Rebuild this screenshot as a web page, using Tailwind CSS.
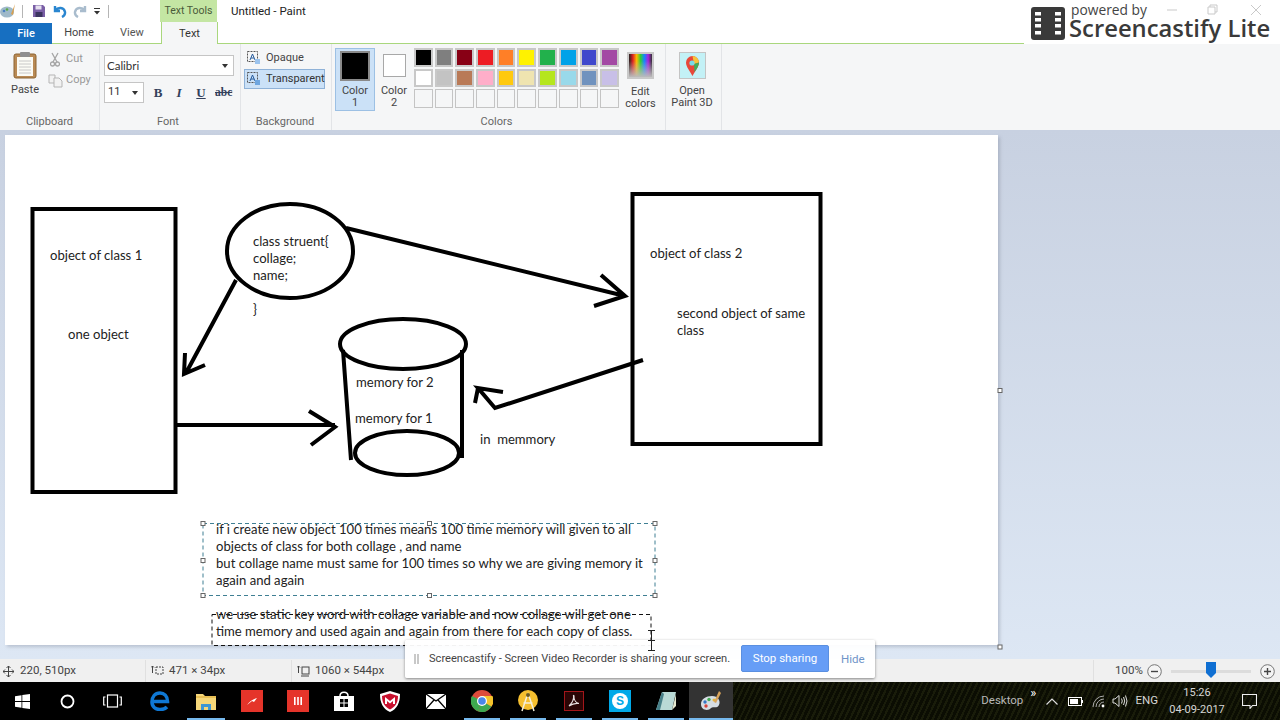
<!DOCTYPE html>
<html>
<head>
<meta charset="utf-8">
<script src="https://cdn.jsdelivr.net/npm/@tailwindcss/browser@4"></script>
</head>
<body class="m-0 overflow-hidden">
<div class="relative flex h-[720px] w-[1280px] flex-col overflow-hidden bg-white font-['Roboto',sans-serif] text-[11px] text-[#3c3c3c]">

  <!-- Title bar + tabs -->
  <header class="relative h-[44px] shrink-0 border-b border-[#a9d77d] bg-white">
    <div class="flex h-[22px] items-center">
      <svg class="ml-[0px] h-[16px] w-[16px]" viewBox="0 0 16 16"><ellipse cx="7" cy="9" rx="7" ry="5.5" fill="#9fb9c9"/><circle cx="4" cy="8" r="1.3" fill="#4a7fc0"/><circle cx="7" cy="6.5" r="1.3" fill="#5aa845"/><path d="M15 1 L11 11 L13 12 Z" fill="#d9a050"/></svg>
      <span class="ml-[6px] h-[13px] w-px bg-[#b5b5b5]"></span>
      <svg class="ml-[9px] h-[14px] w-[14px]" viewBox="0 0 14 14"><path d="M1 1H11L13 3V13H1Z" fill="#7a5fa6"/><rect x="3.500" y="1.500" width="6" height="4" fill="#e6e0ef"/><rect x="3.500" y="8" width="7" height="5" fill="#3c3560"/></svg>
      <svg class="ml-[7px] h-[14px] w-[14px]" viewBox="0 0 14 14"><path d="M2 2V7H7M2 6.500C5 3 11 3 12 8C12.300 10 11 12 9 13" fill="none" stroke="#2a86d0" stroke-width="2.400"/></svg>
      <svg class="ml-[6px] h-[14px] w-[14px]" viewBox="0 0 14 14"><path d="M12 2V7H7M12 6.500C9 3 3 3 2 8C1.700 10 3 12 5 13" fill="none" stroke="#a9bccd" stroke-width="2.400"/></svg>
      <svg class="ml-[6px] h-[8px] w-[8px]" viewBox="0 0 8 8"><path d="M1 1H7V2H1ZM1 4H7L4 7.500Z" fill="#333"/></svg>
      <span class="ml-[7px] h-[13px] w-px bg-[#b5b5b5]"></span>
      <span class="ml-[51px] flex h-[22px] w-[57px] items-center justify-center bg-[#c4e6a3] text-[10.500px] text-[#4a5a3a]">Text Tools</span>
      <span class="ml-[14px] pt-[2px] text-[11.500px] text-[#222]">Untitled - Paint</span>
    </div>
    <nav class="flex h-[22px] items-center">
      <span class="flex h-[21px] w-[52px] items-center justify-center bg-[#176fc1] pt-[2px] text-[11px] font-medium text-white">File</span>
      <span class="w-[54px] pt-[1px] text-center text-[#444]">Home</span>
      <span class="w-[52px] pt-[1px] text-center text-[#555]">View</span>
      <span class="ml-[3px] flex h-[22px] w-[57px] items-center justify-center border-x border-[#a9d77d] bg-[#f5f6f7] pt-[2px] text-[#333]">Text</span>
    </nav>
    <!-- watermark -->
    <div class="absolute left-[1024px] top-0 flex h-[44px] w-[256px] bg-white">
      <svg class="ml-[7px] mt-[7px] h-[33px] w-[34px]" viewBox="0 0 34 33"><rect width="34" height="33" rx="3" fill="#3a3a3a"/><g fill="#fff"><rect x="4" y="5" width="6" height="3.500"/><rect x="4" y="11" width="6" height="3.500"/><rect x="4" y="17" width="6" height="3.500"/><rect x="4" y="24" width="6" height="3.500"/><rect x="24" y="5" width="6" height="3.500"/><rect x="24" y="11" width="6" height="3.500"/><rect x="24" y="17" width="6" height="3.500"/><rect x="24" y="24" width="6" height="3.500"/></g></svg>
      <div class="relative flex-1">
        <span class="absolute left-[6px] top-[3px] whitespace-nowrap font-['Open_Sans',sans-serif] text-[13.800px] leading-[14px] text-[#444]">powered by</span>
        <span class="absolute left-[4px] top-[17px] whitespace-nowrap font-['Open_Sans',sans-serif] text-[23.800px] font-semibold leading-[22px] text-[#3a3a3a]">Screencastify Lite</span>
      </div>
      <svg class="absolute left-[140px] top-[3px] h-[14px] w-[105px]" viewBox="0 0 105 14" fill="none" stroke="#c9c9c9"><path d="M3 7H13"/><path d="M44 4H51V11H44ZM46 4V2H53V9H51"/><path d="M87 2L97 12M97 2L87 12"/></svg>
    </div>
  </header>

  <!-- Ribbon -->
  <section class="flex h-[86px] shrink-0 bg-[#f5f6f7]">
    <!-- Clipboard -->
    <div class="flex w-[100px] flex-col border-r border-[#e2e4e7]">
      <div class="flex h-[71px]">
        <div class="flex w-[50px] flex-col items-center pt-[7px]">
          <svg class="h-[28px] w-[24px]" viewBox="0 0 24 28"><rect x="1" y="3" width="22" height="24" rx="2" fill="#b98a55" stroke="#8d6432"/><rect x="4" y="6" width="16" height="19" fill="#fbfbf5"/><path d="M6 10H18M6 13H18M6 16H18M6 19H18M6 22H18" stroke="#c8c8c8"/><rect x="7" y="1" width="10" height="5" rx="1" fill="#8f8f8f"/></svg>
          <span class="mt-[3px] text-[11px] text-[#444]">Paste</span>
        </div>
        <div class="flex flex-col pt-[8px] text-[#999]">
          <div class="flex h-[15px] items-center gap-[6px]">
            <svg class="h-[15px] w-[10px]" viewBox="0 0 10 15" fill="none" stroke="#a5a5a5" stroke-width="1.300"><path d="M2 1L7 10M8 1L3 10"/><circle cx="2.500" cy="12" r="2"/><circle cx="7.500" cy="12" r="2"/></svg>
            <span>Cut</span>
          </div>
          <div class="mt-[6px] flex h-[15px] items-center gap-[3px]">
            <svg class="-ml-[2px] h-[14px] w-[15px]" viewBox="0 0 15 14" fill="#f2f2f2" stroke="#b5b5b5"><path d="M1 1H7V9H1Z"/><path d="M6 4H11L14 7V13H6Z"/></svg>
            <span>Copy</span>
          </div>
        </div>
      </div>
      <span class="text-center text-[11px] leading-[14px] text-[#666]">Clipboard</span>
    </div>
    <!-- Font -->
    <div class="flex w-[141px] flex-col border-r border-[#e2e4e7] pl-[4px] pr-[4px]">
      <div class="h-[71px] pt-[11px]">
        <div class="flex h-[21px] w-[130px] items-center justify-between border border-[#c5c5c5] bg-white pl-[2px] pr-[5px] font-['Lato',sans-serif] text-[11.500px] text-[#333]">Calibri<span class="h-0 w-0 border-x-[3px] border-t-[4px] border-x-transparent border-t-[#333]"></span></div>
        <div class="mt-[6px] flex items-center">
          <div class="flex h-[21px] w-[40px] items-center justify-between border border-[#c5c5c5] bg-white pl-[3px] pr-[5px] text-[#333]">11<span class="h-0 w-0 border-x-[3px] border-t-[4px] border-x-transparent border-t-[#333]"></span></div>
          <span class="ml-[9px] w-[10px] text-center font-['Liberation_Serif',serif] text-[13px] font-bold text-[#33415c]">B</span>
          <span class="ml-[11px] w-[10px] text-center font-['Liberation_Serif',serif] text-[13px] font-bold italic text-[#33415c]">I</span>
          <span class="ml-[12px] w-[10px] text-center font-['Liberation_Serif',serif] text-[13px] font-bold text-[#33415c] underline">U</span>
          <span class="ml-[9px] font-['Liberation_Serif',serif] text-[11.500px] font-bold text-[#33415c] line-through">abc</span>
        </div>
      </div>
      <span class="-ml-[4px] text-center text-[11px] leading-[14px] text-[#666]">Font</span>
    </div>
    <!-- Background -->
    <div class="flex w-[91px] flex-col border-r border-[#e2e4e7] pl-[3px] pr-[2px]">
      <div class="h-[71px] pt-[5px]">
        <div class="flex h-[18px] items-center gap-[5px] pl-[3px] text-[#444]">
          <svg class="h-[14px] w-[14px]" viewBox="0 0 14 14"><rect x=".5" y=".5" width="10" height="10" fill="none" stroke="#555" stroke-dasharray="2 1"/><path d="M3 9L5.500 3L8 9M4 7H7" fill="none" stroke="#245a9c"/><rect x="8" y="8" width="5" height="5" fill="#9cc4ee"/></svg>
          <span>Opaque</span>
        </div>
        <div class="mt-[2px] flex h-[20px] w-[81px] items-center gap-[5px] border border-[#8fb2d8] bg-[#cbe1f7] pl-[2px] text-[#333]">
          <svg class="h-[14px] w-[14px] shrink-0" viewBox="0 0 14 14"><rect x=".5" y=".5" width="10" height="10" fill="none" stroke="#555" stroke-dasharray="2 1"/><path d="M3 9L5.500 3L8 9M4 7H7" fill="none" stroke="#245a9c"/><rect x="8" y="8" width="5" height="5" fill="#6ea6e0"/></svg>
          <span class="whitespace-nowrap">Transparent</span>
        </div>
      </div>
      <span class="-ml-[3px] text-center text-[11px] leading-[14px] text-[#666]">Background</span>
    </div>
    <!-- Colors -->
    <div class="flex w-[334px] flex-col border-r border-[#e2e4e7] pr-[2px]">
      <div class="flex h-[71px] pl-[3px] pt-[4px]">
        <div class="flex h-[63px] w-[40px] flex-col items-center border border-[#9cc0e4] bg-[#cbe1f7] pt-[2px] leading-[12px] text-[#444]">
          <span class="block h-[30px] w-[30px] border-2 border-[#8a8a8a] bg-black"></span>
          <span class="mt-[4px] text-center">Color<br>1</span>
        </div>
        <div class="flex w-[38px] flex-col items-center pt-[6px] leading-[12px] text-[#444]">
          <span class="block h-[23px] w-[23px] border border-[#a8a8a8] bg-white"></span>
          <span class="mt-[8px] text-center">Color<br>2</span>
        </div>
        <div class="ml-[1px] grid h-[61px] grid-cols-[repeat(10,18.700px)] grid-rows-[repeat(3,18.700px)] gap-[2px]">
          <span class="border-2 border-[#c8c8c8] bg-[#000000]"></span><span class="border-2 border-[#c8c8c8] bg-[#7f7f7f]"></span><span class="border-2 border-[#c8c8c8] bg-[#880015]"></span><span class="border-2 border-[#c8c8c8] bg-[#ed1c24]"></span><span class="border-2 border-[#c8c8c8] bg-[#ff7f27]"></span><span class="border-2 border-[#c8c8c8] bg-[#fff200]"></span><span class="border-2 border-[#c8c8c8] bg-[#22b14c]"></span><span class="border-2 border-[#c8c8c8] bg-[#00a2e8]"></span><span class="border-2 border-[#c8c8c8] bg-[#3f48cc]"></span><span class="border-2 border-[#c8c8c8] bg-[#a349a4]"></span>
          <span class="border-2 border-[#c8c8c8] bg-[#ffffff]"></span><span class="border-2 border-[#c8c8c8] bg-[#c3c3c3]"></span><span class="border-2 border-[#c8c8c8] bg-[#b97a57]"></span><span class="border-2 border-[#c8c8c8] bg-[#ffaec9]"></span><span class="border-2 border-[#c8c8c8] bg-[#ffc90e]"></span><span class="border-2 border-[#c8c8c8] bg-[#efe4b0]"></span><span class="border-2 border-[#c8c8c8] bg-[#b5e61d]"></span><span class="border-2 border-[#c8c8c8] bg-[#99d9ea]"></span><span class="border-2 border-[#c8c8c8] bg-[#7092be]"></span><span class="border-2 border-[#c8c8c8] bg-[#c8bfe7]"></span>
          <span class="border border-[#c4c4c4] bg-[#f5f6f7]"></span><span class="border border-[#c4c4c4] bg-[#f5f6f7]"></span><span class="border border-[#c4c4c4] bg-[#f5f6f7]"></span><span class="border border-[#c4c4c4] bg-[#f5f6f7]"></span><span class="border border-[#c4c4c4] bg-[#f5f6f7]"></span><span class="border border-[#c4c4c4] bg-[#f5f6f7]"></span><span class="border border-[#c4c4c4] bg-[#f5f6f7]"></span><span class="border border-[#c4c4c4] bg-[#f5f6f7]"></span><span class="border border-[#c4c4c4] bg-[#f5f6f7]"></span><span class="border border-[#c4c4c4] bg-[#f5f6f7]"></span>
        </div>
        <div class="ml-[1px] flex w-[41px] flex-col items-center pt-[4px] leading-[12px] text-[#444]">
          <span class="block h-[27px] w-[27px] border-2 border-[#c8c8c8] bg-[linear-gradient(to_bottom,transparent_30%,#bbbbbb),linear-gradient(to_right,#222222,#e22222,#ffbb00,#33cc33,#1188ff,#aa22dd,#333333)]"></span>
          <span class="mt-[7px] text-center">Edit<br>colors</span>
        </div>
      </div>
      <span class="-ml-[2px] text-center text-[11px] leading-[14px] text-[#666]">Colors</span>
    </div>
    <!-- Paint 3D -->
    <div class="flex w-[56px] flex-col items-center border-r border-[#e2e4e7] pr-[3px] pt-[8px] leading-[12px] text-[#444]">
      <svg class="h-[27px] w-[27px]" viewBox="0 0 27 27"><rect x=".5" y=".5" width="26" height="26" fill="#c3f1f6" stroke="#c4c4c4"/><path d="M13.500 24C11 19 7 15 7 10.500A6.500 6.500 0 0 1 20 10.500C20 15 16 19 13.500 24Z" fill="#e8483a"/><path d="M13.500 4A6.500 6.500 0 0 1 20 10.500L15 12Z" fill="#f6c43a"/><path d="M15 12L20 10.500C20 13 18 17 15.500 20Z" fill="#3fae5a"/><circle cx="13" cy="11" r="2.600" fill="#7adbe8"/></svg>
      <span class="mt-[6px] text-center whitespace-nowrap">Open<br>Paint 3D</span>
    </div>
  </section>

  <!-- Work area -->
  <main class="relative h-[529px] shrink-0 overflow-hidden bg-linear-to-b from-[#c8d1e1] to-[#dde7f4]">
    <div class="ml-[5px] mt-[5px] h-[510px] w-[993px] bg-white shadow-[2px_2px_3px_rgba(120,130,150,0.35)]"></div>
    <svg class="absolute left-0 top-0 h-[529px] w-[1280px]" viewBox="0 130 1280 529" fill="none" stroke="#000" stroke-width="4">
      <rect x="32.500" y="209" width="143" height="283"/>
      <rect x="632.500" y="194" width="188" height="250"/>
      <ellipse cx="290" cy="251" rx="63" ry="47"/>
      <path d="M346 228L625 296M601 275L625 296L594 306"/>
      <path d="M236 280L186 373M185 353L184 374L205 365"/>
      <path d="M176 425H335M309 411L335 427L311 445"/>
      <ellipse cx="403" cy="344" rx="63" ry="25"/>
      <path d="M343 350L351 460M462 350V458"/>
      <ellipse cx="407" cy="453" rx="52" ry="22"/>
      <path d="M643 360L495 408L478 388L503 392M478 388L475 403"/>
      <!-- selection -->
      <rect x="203" y="523.500" width="452" height="72" stroke="#3f7f93" stroke-width="1" stroke-dasharray="4 3"/>
      <g fill="#fff" stroke="#666" stroke-width="1">
        <rect x="201" y="521.500" width="4" height="4"/><rect x="427.500" y="521.500" width="4" height="4"/><rect x="653" y="521.500" width="4" height="4"/>
        <rect x="201" y="558.500" width="4" height="4"/><rect x="653" y="558.500" width="4" height="4"/>
        <rect x="201" y="593.500" width="4" height="4"/><rect x="427.500" y="593.500" width="4" height="4"/><rect x="653" y="593.500" width="4" height="4"/>
        <rect x="998" y="388.500" width="4" height="4"/><rect x="998" y="645" width="4" height="4"/>
      </g>
      <rect x="212" y="614.500" width="439" height="31" stroke="#111" stroke-width="1" stroke-dasharray="4 3"/>
    </svg>
    <div class="absolute inset-0 font-['Lato',sans-serif] text-[13.100px] leading-[17px] text-[#222]">
      <span class="absolute left-[50px] top-[117px]">object of class 1</span>
      <span class="absolute left-[68px] top-[196px]">one object</span>
      <span class="absolute left-[253px] top-[103px]">class struent{<br>collage;<br>name;</span>
      <span class="absolute left-[253px] top-[171px]">}</span>
      <span class="absolute left-[356px] top-[244px]">memory for 2</span>
      <span class="absolute left-[355px] top-[280px]">memory for 1</span>
      <span class="absolute left-[480px] top-[301px]">in&nbsp; memmory</span>
      <span class="absolute left-[650px] top-[115px]">object of class 2</span>
      <span class="absolute left-[677px] top-[175px] w-[140px]">second object of same class</span>
      <span class="absolute left-[216px] top-[391px] whitespace-nowrap">if i create new object 100 times means 100 time memory will given to all<br>objects of class for both collage , and name<br>but collage name must same for 100 times so why we are giving memory it<br>again and again</span>
      <span class="absolute left-[216px] top-[476px] whitespace-nowrap">we use static key word with collage variable and now collage will get one<br>time memory and used again and again from there for each copy of class.</span>
    </div>
  </main>

  <!-- Status bar -->
  <footer class="flex h-[23px] shrink-0 items-center bg-[#f0f0f0] pt-[1px] text-[11.500px] text-[#444]">
    <div class="flex h-full w-[146px] items-center gap-[6px] border-r border-[#e0e0e0] pl-[3px]">
      <svg class="h-[11px] w-[11px]" viewBox="0 0 11 11" fill="none" stroke="#444"><path d="M5.500 0V11M0 5.500H11M3.500 2L5.500 0L7.500 2M3.500 9L5.500 11L7.500 9M2 3.500L0 5.500L2 7.500M9 3.500L11 5.500L9 7.500"/></svg>
      <span>220, 510px</span>
    </div>
    <div class="flex h-full w-[146px] items-center gap-[5px] border-r border-[#e0e0e0] pl-[5px]">
      <svg class="h-[12px] w-[13px]" viewBox="0 0 13 12" fill="none" stroke="#444"><path d="M1.500 1V8M0 2.500L1.500 1L3 2.500"/><rect x="5" y="2" width="7" height="7" stroke-dasharray="2 1"/></svg>
      <span>471 × 34px</span>
    </div>
    <div class="flex h-full items-center gap-[5px] pl-[5px]">
      <svg class="h-[12px] w-[13px]" viewBox="0 0 13 12" fill="none" stroke="#444"><path d="M1.500 1V8M0 2.500L1.500 1L3 2.500"/><rect x="5" y="2" width="7" height="7"/><path d="M4 11H12"/></svg>
      <span>1060 × 544px</span>
    </div>
    <div class="ml-auto flex h-full w-[187px] items-center border-l border-[#e0e0e0] pl-[21px] text-[11.500px]">
      <span class="w-[32px]">100%</span>
      <svg class="h-[15px] w-[15px]" viewBox="0 0 15 15" fill="#f4f4f4" stroke="#777"><circle cx="7.500" cy="7.500" r="6.800"/><path d="M4 7.500H11" stroke="#444" stroke-width="1.400"/></svg>
      <div class="relative ml-[9px] h-[3px] w-[80px] bg-[#dcdcdc]">
        <svg class="absolute left-[35px] top-[-8px] h-[16px] w-[10px]" viewBox="0 0 10 16"><path d="M0 0H10V11L5 16L0 11Z" fill="#0f6fd2"/></svg>
      </div>
      <svg class="ml-[9px] h-[15px] w-[15px]" viewBox="0 0 15 15" fill="#f4f4f4" stroke="#777"><circle cx="7.500" cy="7.500" r="6.800"/><path d="M4 7.500H11M7.500 4V11" stroke="#444" stroke-width="1.400"/></svg>
    </div>
  </footer>

  <!-- Taskbar -->
  <div class="flex h-[38px] shrink-0 items-center bg-[repeating-linear-gradient(115deg,#191c0a_0px,#191c0a_2px,#0b0d03_2px,#0b0d03_5px)] text-white">
    <div class="flex h-full items-center bg-black">
      <span class="flex h-full w-[45px] items-center justify-center"><svg class="h-[15px] w-[15px]" viewBox="0 0 15 15" fill="#fff"><path d="M0 2.200L6.500 1.200V7H0ZM7.300 1L15 0V7H7.300ZM0 8H6.500V13.800L0 12.800ZM7.300 8H15V15L7.300 14Z"/></svg></span>
      <span class="flex h-full w-[45px] items-center justify-center"><svg class="h-[15px] w-[15px]" viewBox="0 0 15 15" fill="none" stroke="#fff" stroke-width="1.800"><circle cx="7.500" cy="7.500" r="6"/></svg></span>
      <span class="flex h-full w-[45px] items-center justify-center"><svg class="h-[14px] w-[19px]" viewBox="0 0 19 14" fill="none" stroke="#fff" stroke-width="1.200"><rect x="4.500" y="1" width="10" height="12"/><path d="M2.500 3H.7V11H2.500M16.500 3H18.300V11H16.500"/></svg></span>
      <span class="ml-[2px] flex h-full w-[46px] items-center justify-center"><svg class="h-[20px] w-[20px]" viewBox="0 0 20 20" fill="none" stroke="#0f78d4" stroke-width="3.600"><path d="M2.500 10.500H17.500C17.500 5 14 2 10 2C5 2 2 6 2 11C2 16 6 18.500 10 18.500C13 18.500 15.500 17.500 17 16"/></svg></span>
      <span class="relative flex h-full w-[46px] items-center justify-center"><svg class="h-[17px] w-[20px]" viewBox="0 0 20 17"><path d="M0 1H7L9 3H20V17H0Z" fill="#f6d77a"/><path d="M5 11H15V17H12V14H8V17H5Z" fill="#3d96d4"/><path d="M0 3H20V5H0Z" fill="#e8bf54"/></svg><span class="absolute bottom-0 left-[4px] h-[2px] w-[38px] bg-[#76b9ed]"></span></span>
      <span class="flex h-full w-[46px] items-center justify-center"><span class="flex h-[22px] w-[22px] items-center justify-center bg-[#e5342a]"><svg class="h-[10px] w-[12px]" viewBox="0 0 12 10" fill="#fff"><path d="M1 9C3 6 7 3 11 2L8 6L6 5Z"/></svg></span></span>
      <span class="flex h-full w-[46px] items-center justify-center"><span class="flex h-[22px] w-[22px] items-center justify-center bg-[#e5342a]"><svg class="h-[10px] w-[10px]" viewBox="0 0 10 10" fill="#fff"><path d="M1 1H2.600V9H1ZM4.200 1H5.800V9H4.200ZM7.400 1H9V9H7.400Z"/></svg></span></span>
      <span class="flex h-full w-[46px] items-center justify-center"><svg class="h-[22px] w-[20px]" viewBox="0 0 20 22"><path d="M6 6C6 1 14 1 14 6" fill="none" stroke="#fff" stroke-width="1.500"/><path d="M0 6H20V21H0Z" fill="#fff"/><path d="M6 9H9.500V12.500H6ZM10.500 9H14V12.500H10.500ZM6 13.500H9.500V17H6ZM10.500 13.500H14V17H10.500Z" fill="#000"/></svg></span>
      <span class="flex h-full w-[46px] items-center justify-center"><svg class="h-[21px] w-[20px]" viewBox="0 0 20 21"><path d="M10 0L20 3C20 12 17 18 10 21C3 18 0 12 0 3Z" fill="#fff"/><path d="M10 2.500L18 5C18 12 15 16 10 18.500C5 16 2 12 2 5Z" fill="#c8102e"/><path d="M5 13V6L10 10L15 6V13H13V10L10 12.500L7 10V13Z" fill="#fff"/></svg></span>
      <span class="flex h-full w-[46px] items-center justify-center"><svg class="h-[15px] w-[20px]" viewBox="0 0 20 15"><path d="M0 0H20V15H0Z" fill="#fff"/><path d="M0 0L10 7L20 0M0 15L8 6M20 15L12 6" fill="none" stroke="#000" stroke-width="1.300"/></svg></span>
      <span class="relative flex h-full w-[46px] items-center justify-center"><svg class="h-[22px] w-[22px]" viewBox="0 0 22 22"><circle cx="11" cy="11" r="11" fill="#de4b3b"/><path d="M11 11L20.500 16.500A11 11 0 0 1 7 21.300Z" fill="#3da84f"/><path d="M11 11L7 21.300A11 11 0 0 1 1 6Z" fill="#3da84f"/><path d="M11 6H21.500A11 11 0 0 1 20.500 16.500L11 11Z" fill="#f5c42c"/><circle cx="11" cy="11" r="5" fill="#fff"/><circle cx="11" cy="11" r="3.800" fill="#4a86e8"/></svg><span class="absolute bottom-0 left-[5px] h-[2px] w-[36px] bg-[#76b9ed]"></span></span>
      <span class="relative flex h-full w-[46px] items-center justify-center"><svg class="h-[22px] w-[22px]" viewBox="0 0 22 22"><circle cx="11" cy="10" r="10" fill="#f5bf2f"/><path d="M11 3L5 21M11 3L17 21M6.500 13H15.500" fill="none" stroke="#f5f0dc" stroke-width="1.500"/><circle cx="11" cy="5" r="2" fill="#6d5a1e"/></svg><span class="absolute bottom-0 left-[5px] h-[2px] w-[36px] bg-[#76b9ed]"></span></span>
      <span class="relative flex h-full w-[46px] items-center justify-center"><span class="flex h-[20px] w-[20px] items-center justify-center border border-[#a3161a] bg-[#2a0505]"><svg class="h-[14px] w-[14px]" viewBox="0 0 14 14" fill="none" stroke="#e8e0e0" stroke-width="1.100"><path d="M2 12C5 9 7 5 6.500 2C6 1 7.500 1 7 3C7 6 9 9 12 9.500C9 9 5 10 2 12Z"/></svg></span><span class="absolute bottom-0 left-[5px] h-[2px] w-[36px] bg-[#76b9ed]"></span></span>
      <span class="relative flex h-full w-[46px] items-center justify-center"><span class="flex h-[22px] w-[22px] items-center justify-center bg-[#00a9e8] font-['Liberation_Sans',sans-serif] text-[15px] font-bold text-white"><span class="flex h-[16px] w-[16px] items-center justify-center rounded-full bg-white text-[12px] text-[#00a9e8]">S</span></span><span class="absolute bottom-0 left-[5px] h-[2px] w-[36px] bg-[#76b9ed]"></span></span>
      <span class="relative flex h-full w-[46px] items-center justify-center"><svg class="h-[20px] w-[20px]" viewBox="0 0 20 20"><path d="M6 1H20L16 19H0Z" fill="#b9d9d6"/><path d="M6 1L0 19L4 19L8 3Z" fill="#477f88"/><path d="M16 19L20 3V15Z" fill="#e4e8d0"/></svg><span class="absolute bottom-0 left-[5px] h-[2px] w-[36px] bg-[#76b9ed]"></span></span>
      <span class="relative flex h-full w-[44px] items-center justify-center bg-[#333333]"><svg class="h-[21px] w-[22px]" viewBox="0 0 22 21"><path d="M1 13C1 8 6 5 12 5C18 5 21 10 19 14C17 18 13 15 11 17C9 20 1 20 1 13Z" fill="#d5dde3"/><circle cx="5" cy="11" r="1.700" fill="#3477c4"/><circle cx="9" cy="8.500" r="1.700" fill="#43a853"/><circle cx="14" cy="9" r="1.500" fill="#e5b43a"/><circle cx="6" cy="15" r="1.700" fill="#d6433a"/><path d="M19 0L14 11L16 12L21 2Z" fill="#d8a35b"/></svg><span class="absolute bottom-0 left-0 h-[2px] w-full bg-[#76b9ed]"></span></span>
    </div>
    <div class="ml-auto flex h-full items-center text-[#d6d6d6]">
      <span class="text-[11.500px] text-[#b8b8b8]">Desktop</span>
      <span class="mb-[18px] ml-[7px] text-[13px] leading-none text-white">»</span>
      <svg class="ml-[10px] h-[7px] w-[12px]" viewBox="0 0 12 7" fill="none" stroke="#ddd" stroke-width="1.200"><path d="M.5 6.500L6 1L11.500 6.500"/></svg>
      <svg class="ml-[10px] h-[9px] w-[15px]" viewBox="0 0 15 9"><rect x=".5" y=".5" width="13" height="8" fill="none" stroke="#fff"/><rect x="2" y="2" width="8" height="5" fill="#fff"/><rect x="14" y="3" width="1" height="3" fill="#fff"/></svg>
      <svg class="ml-[9px] h-[13px] w-[13px]" viewBox="0 0 13 13" fill="none" stroke="#aaa"><path d="M1 12A11 11 0 0 1 12 1M4 12A8 8 0 0 1 12 4M7 12A5 5 0 0 1 12 7"/><circle cx="11" cy="11" r="1.400" fill="#fff" stroke="none"/></svg>
      <svg class="ml-[7px] h-[14px] w-[16px]" viewBox="0 0 16 14" fill="none" stroke="#ddd"><path d="M1 5H3L7 1.500V12.500L3 9H1ZM9.500 4.500Q11 7 9.500 9.500M11.500 3Q14 7 11.500 11M13.500 1.500Q16.500 7 13.500 12.500"/></svg>
      <span class="ml-[7px] text-[11.500px]">ENG</span>
      <div class="ml-[9px] flex w-[60px] flex-col items-center text-[11px] leading-[17px]">
        <span>15:26</span><span class="whitespace-nowrap">04-09-2017</span>
      </div>
      <svg class="ml-[15px] mr-[23px] h-[15px] w-[15px]" viewBox="0 0 15 15" fill="none" stroke="#eee" stroke-width="1.100"><path d="M.5.500H14.500V11.500H10.500L8 14.500V11.500H.5Z"/></svg>
    </div>
  </div>

  <!-- Chrome sharing bar -->
  <div class="absolute left-[405px] top-[640px] flex h-[38px] w-[470px] items-center rounded-[2px] bg-white/95 text-[11.500px] text-[#444] shadow-[0_1px_3px_rgba(0,0,0,0.45)]">
    <span class="ml-[9px] h-[10px] w-[5px] border-x-2 border-[#c8c8c8]"></span>
    <span class="ml-[10px] whitespace-nowrap text-[11.100px]">Screencastify - Screen Video Recorder is sharing your screen.</span>
    <span class="absolute left-[336px] top-[5px] flex h-[27px] w-[88px] items-center justify-center rounded-[2px] border border-[#5a8fe0] bg-[#669df6] text-white">Stop sharing</span>
    <span class="absolute left-[436px] top-[11px] text-[#6f94c8]">Hide</span>
  </div>
  <!-- I-beam cursor -->
  <svg class="absolute left-[647px] top-[630px] h-[21px] w-[9px]" viewBox="0 0 9 21" fill="none" stroke="#222"><path d="M1 .5H8M4.500 .5V20.500M1 20.500H8M1 10.500H8"/></svg>
</div>
</body>
</html>
